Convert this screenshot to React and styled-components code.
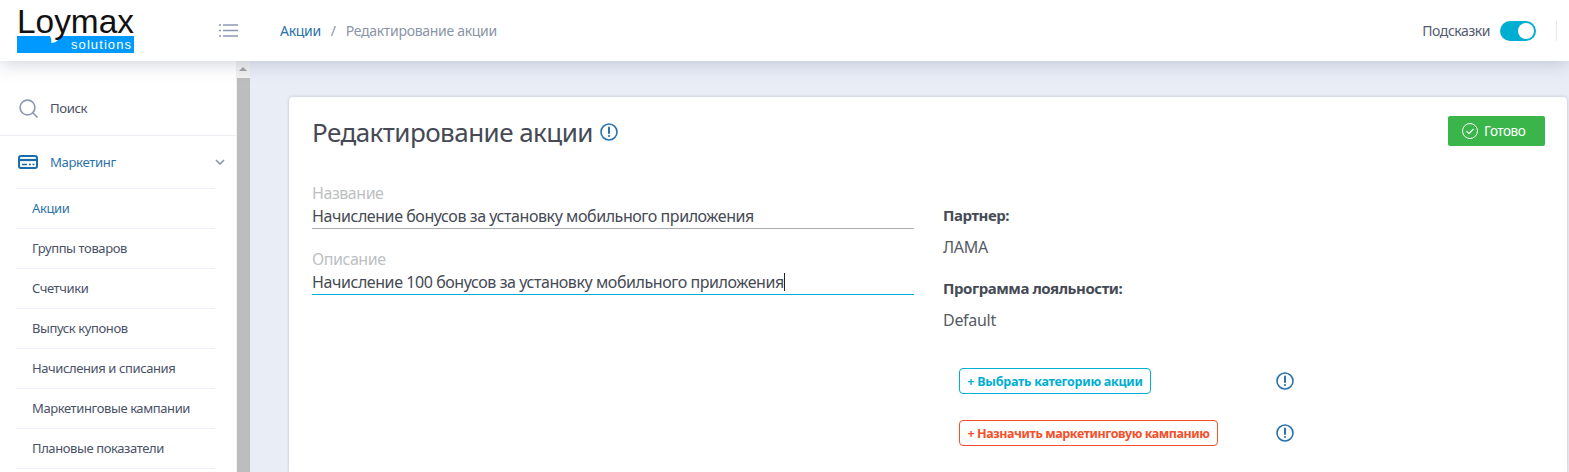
import React from "react";
import styled, { createGlobalStyle } from "styled-components";

const Global = createGlobalStyle`
  html, body {
    margin: 0;
    height: 100%;
    overflow: hidden;
    background: #e9edf6;
    font-family: "Noto Sans", "Open Sans", sans-serif;
  }
  * { box-sizing: border-box; }
`;

const Page = styled.div`
  width: 1569px;
  height: 472px;
  display: flex;
  flex-direction: column;
  overflow: hidden;
`;

const Header = styled.header`
  height: 61px;
  flex: none;
  background: #fff;
  display: flex;
  align-items: center;
  padding: 0 12px 0 17px;
  position: relative;
  z-index: 2;
  box-shadow: 0 2px 18px rgba(90, 100, 130, 0.3);
`;

const LogoBox = styled.svg`
  display: block;
  flex: none;
  margin-top: 2px;
  overflow: visible;
`;

const MenuButton = styled.button`
  border: 0;
  background: none;
  padding: 0;
  margin-left: 85px;
  display: flex;
  flex: none;
`;

const Crumbs = styled.nav`
  display: flex;
  align-items: center;
  margin-left: 42px;
  font-size: 14px;
  letter-spacing: -0.3px;
`;

const CrumbLink = styled.a`
  color: #2b72ab;
`;

const CrumbSep = styled.span`
  color: #8a94a8;
  margin: 0 10px;
`;

const CrumbCurrent = styled.span`
  color: #8a94a8;
`;

const HeaderRight = styled.div`
  margin-left: auto;
  display: flex;
  align-items: center;
`;

const HintLabel = styled.span`
  font-size: 14px;
  letter-spacing: -0.45px;
  color: #545b70;
  margin-right: 10px;
`;

const Toggle = styled.span`
  width: 36px;
  height: 20px;
  border-radius: 10px;
  background: #00aed1;
  display: flex;
  justify-content: flex-end;
  align-items: center;
  padding-right: 2px;
`;

const ToggleKnob = styled.span`
  width: 16px;
  height: 16px;
  border-radius: 50%;
  background: #fff;
`;

const HeaderDivider = styled.span`
  width: 1px;
  height: 20px;
  background: #e6e8ee;
  margin-left: 20px;
`;

const Body = styled.div`
  flex: 1;
  display: flex;
  min-height: 0;
`;

const Sidebar = styled.aside`
  width: 236px;
  flex: none;
  background: #fff;
`;

const SearchRow = styled.div`
  height: 75px;
  display: flex;
  align-items: center;
  padding: 20px 0 0 19px;
  border-bottom: 1px solid #eceef3;
  gap: 12px;
  font-size: 13.2px;
  letter-spacing: -0.4px;
  color: #4a5168;
`;

const MarketingRow = styled.div`
  height: 52px;
  display: flex;
  align-items: center;
  padding: 0 11px 0 18px;
  font-size: 13.2px;
  letter-spacing: -0.4px;
  color: #2b72ab;
`;

const MarketingLabel = styled.span`
  margin-left: 12px;
  flex: 1;
`;

const SubMenu = styled.ul`
  list-style: none;
  margin: 0 21px 0 16px;
  padding: 0;
  border-top: 1px solid #edf0f8;
`;

const SubItem = styled.li`
  height: 40px;
  display: flex;
  align-items: center;
  padding: 0 0 2px 16px;
  border-bottom: 1px solid #edf0f8;
  font-size: 13px;
  letter-spacing: -0.4px;
  color: ${(p) => (p.$active ? "#2b72ab" : "#4a5168")};
`;

const Scrollbar = styled.div`
  width: 14px;
  flex: none;
  background: #f1f1f1;
  display: flex;
  flex-direction: column;
  align-items: center;
  padding-top: 6px;
`;

const ScrollArrow = styled.span`
  width: 0;
  height: 0;
  border-left: 4px solid transparent;
  border-right: 4px solid transparent;
  border-bottom: 4px solid #a3a3a3;
  flex: none;
`;

const ScrollThumb = styled.div`
  width: 13px;
  flex: 1;
  margin-top: 7px;
  background: #bdbdbd;
`;

const Main = styled.main`
  flex: 1;
  min-width: 0;
  padding: 36px 2px 0 39px;
`;

const Card = styled.section`
  height: 100%;
  background: #fff;
  border-radius: 4px 4px 0 0;
  box-shadow: 0 0 3px rgba(90, 95, 110, 0.35);
  padding: 17px 22px 0 23px;
`;

const TitleRow = styled.div`
  display: flex;
  align-items: flex-start;
`;

const Title = styled.h1`
  margin: 0;
  font-size: 26px;
  line-height: 36px;
  font-weight: 400;
  letter-spacing: -0.55px;
  color: #454a55;
`;

const TitleInfo = styled.span`
  display: flex;
  margin: 9px 0 0 7px;
`;

const DoneButton = styled.button`
  margin: 2px 0 0 auto;
  width: 97px;
  height: 30px;
  border: 0;
  border-radius: 2px;
  background: #39b54a;
  color: #fff;
  display: flex;
  align-items: center;
  gap: 6px;
  padding: 0 0 0 14px;
  font: inherit;
  font-size: 13.5px;
  letter-spacing: -0.45px;
`;

const Columns = styled.div`
  display: flex;
  margin-top: 33px;
`;

const FormColumn = styled.div`
  width: 602px;
  flex: none;
`;

const Field = styled.div`
  margin-bottom: 20px;
`;

const FieldLabel = styled.div`
  font-size: 16px;
  line-height: 20px;
  letter-spacing: -0.45px;
  color: #bcbfc4;
  margin-bottom: 3px;
`;

const FieldValue = styled.div`
  font-size: 16px;
  line-height: 20px;
  letter-spacing: -0.43px;
  color: #454a55;
  padding-bottom: 2px;
  border-bottom: 1px solid ${(p) => (p.$focused ? "#00aed1" : "#a8abb0")};
`;

const Caret = styled.span`
  display: inline-block;
  width: 1px;
  height: 18px;
  background: #222;
  vertical-align: -3px;
`;

const InfoColumn = styled.div`
  margin-left: 29px;
  flex: 1;
  padding-top: 22px;
`;

const InfoName = styled.div`
  font-size: 15px;
  line-height: 20px;
  font-weight: 700;
  letter-spacing: -0.44px;
  color: #454a55;
  margin-bottom: 12px;
`;

const InfoValue = styled.div`
  font-size: 16px;
  line-height: 20px;
  letter-spacing: -0.3px;
  color: #555a65;
  margin-bottom: 21px;
`;

const ActionList = styled.div`
  margin: 38px 0 0 16px;
  display: flex;
  flex-direction: column;
  gap: 26px;
`;

const ActionRow = styled.div`
  display: flex;
  align-items: center;
  height: 26px;
`;

const ActionSlot = styled.div`
  width: 317px;
  flex: none;
`;

const ActionButton = styled.button`
  height: 26px;
  width: ${(p) => p.$width}px;
  border: 1px solid ${(p) => p.$color};
  border-radius: 4px;
  background: #fff;
  color: ${(p) => p.$color};
  font: inherit;
  font-size: 12.5px;
  font-weight: 700;
  letter-spacing: ${(p) => p.$spacing}px;
  padding: 0;
  white-space: nowrap;
`;

const InfoIcon = ({ size = 18 }) => (
  <svg width={size} height={size} viewBox="0 0 18 18" fill="none">
    <circle cx="9" cy="9" r="8" stroke="#2b72ab" strokeWidth="1.6" />
    <path d="M9 4.6v5.4" stroke="#2b72ab" strokeWidth="2" strokeLinecap="round" />
    <circle cx="9" cy="13" r="1.1" fill="#2b72ab" />
  </svg>
);

const menuItems = [
  "Акции",
  "Группы товаров",
  "Счетчики",
  "Выпуск купонов",
  "Начисления и списания",
  "Маркетинговые кампании",
  "Плановые показатели",
];

export default function App() {
  return (
    <Page>
      <Global />
      <Header>
        <LogoBox width="117" height="45" viewBox="0 0 117 45">
          <rect x="0" y="27" width="117" height="17" fill="#0099ff" />
          <path d="M33 27h10c-1 4-4 7-9 7 1-2 0-5-1-7z" fill="#fff" />
          <text x="0" y="24" fontFamily="Liberation Sans" fontSize="33.5" textLength="117" lengthAdjust="spacingAndGlyphs" fill="#111">Loymax</text>
          <text x="54" y="40" fontFamily="Liberation Sans" fontSize="13" textLength="60" fill="#fff">solutions</text>
        </LogoBox>
        <MenuButton aria-label="menu">
          <svg width="19" height="13" viewBox="0 0 19 13" fill="none" stroke="#8d99b3" strokeWidth="1.5">
            <path d="M0 1h2M4 1h15M0 6.5h2M4 6.5h15M0 12h2M4 12h15" />
          </svg>
        </MenuButton>
        <Crumbs>
          <CrumbLink>Акции</CrumbLink>
          <CrumbSep>/</CrumbSep>
          <CrumbCurrent>Редактирование акции</CrumbCurrent>
        </Crumbs>
        <HeaderRight>
          <HintLabel>Подсказки</HintLabel>
          <Toggle><ToggleKnob /></Toggle>
          <HeaderDivider />
        </HeaderRight>
      </Header>
      <Body>
        <Sidebar>
          <SearchRow>
            <svg width="19" height="19" viewBox="0 0 19 19" fill="none" stroke="#8d99b3" strokeWidth="1.7">
              <circle cx="8.5" cy="8.5" r="7.4" />
              <path d="M14 14l4 4" strokeLinecap="round" />
            </svg>
            Поиск
          </SearchRow>
          <MarketingRow>
            <svg width="20" height="14" viewBox="0 0 20 14" fill="none">
              <rect x="1" y="1" width="18" height="12" rx="2" stroke="#1c6cab" strokeWidth="2" />
              <path d="M1 5h18" stroke="#1c6cab" strokeWidth="2.2" />
              <path d="M4 9.5h5M11 9.5h2M14.5 9.5h2" stroke="#1c6cab" strokeWidth="1.6" />
            </svg>
            <MarketingLabel>Маркетинг</MarketingLabel>
            <svg width="10" height="6" viewBox="0 0 10 6" fill="none" stroke="#8d99b3" strokeWidth="1.7">
              <path d="M1 1l4 4 4-4" />
            </svg>
          </MarketingRow>
          <SubMenu>
            {menuItems.map((item, i) => (
              <SubItem key={item} $active={i === 0}>{item}</SubItem>
            ))}
          </SubMenu>
        </Sidebar>
        <Scrollbar>
          <ScrollArrow />
          <ScrollThumb />
        </Scrollbar>
        <Main>
          <Card>
            <TitleRow>
              <Title>Редактирование акции</Title>
              <TitleInfo><InfoIcon /></TitleInfo>
              <DoneButton>
                <svg width="16" height="16" viewBox="0 0 16 16" fill="none" stroke="#fff" strokeWidth="1">
                  <circle cx="8" cy="8" r="7.5" />
                  <path d="M4.5 8.2l2.4 2.4 4.6-4.6" strokeWidth="1.2" />
                </svg>
                Готово
              </DoneButton>
            </TitleRow>
            <Columns>
              <FormColumn>
                <Field>
                  <FieldLabel>Название</FieldLabel>
                  <FieldValue>Начисление бонусов за установку мобильного приложения</FieldValue>
                </Field>
                <Field>
                  <FieldLabel>Описание</FieldLabel>
                  <FieldValue $focused>Начисление 100 бонусов за установку мобильного приложения<Caret /></FieldValue>
                </Field>
              </FormColumn>
              <InfoColumn>
                <InfoName>Партнер:</InfoName>
                <InfoValue>ЛАМА</InfoValue>
                <InfoName>Программа лояльности:</InfoName>
                <InfoValue>Default</InfoValue>
                <ActionList>
                  <ActionRow>
                    <ActionSlot><ActionButton $color="#00aed1" $width={192} $spacing={-0.25}>+ Выбрать категорию акции</ActionButton></ActionSlot>
                    <InfoIcon />
                  </ActionRow>
                  <ActionRow>
                    <ActionSlot><ActionButton $color="#f4502a" $width={259} $spacing={-0.42}>+ Назначить маркетинговую кампанию</ActionButton></ActionSlot>
                    <InfoIcon />
                  </ActionRow>
                </ActionList>
              </InfoColumn>
            </Columns>
          </Card>
        </Main>
      </Body>
    </Page>
  );
}
